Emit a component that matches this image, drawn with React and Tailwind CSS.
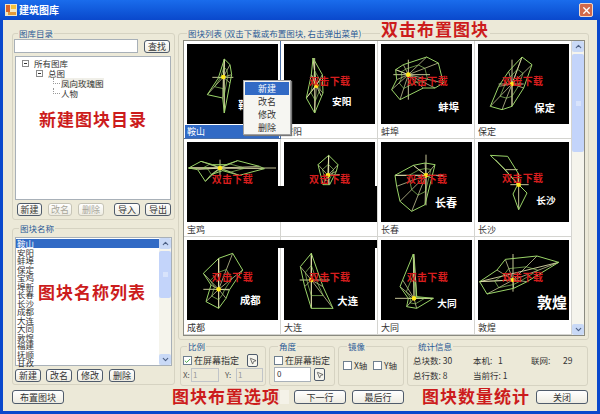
import { Check, ChevronDown, ChevronUp, MousePointer2, X } from "lucide-react";

const cells = [
  { name: "鞍山", ox: 21, oy: 133, selected: true, outline: "133,178 150,195 155,225 150,250 133,340 128,295 82,285 115,235 133,178", spokes: "M133 178V340M97 233H160", c: [130, 232], label: { text: "鞍山", x: 175, y: 328, size: 30 } },
  { name: "安阳", ox: 313, oy: 133, outline: "400,175 428,225 430,280 405,340 380,295 395,225 400,175", spokes: "M405 175V340M380 295L425 235M395 225L425 290", c: [410, 258], red: [388, 255], label: { text: "安阳", x: 457, y: 316, size: 29 } },
  { name: "蚌埠", ox: 3, oy: 133, outline: "47,210 70,195 140,172 175,190 190,250 165,265 130,265 60,300 35,270 50,240 47,210", spokes: "M85 180V300M40 225H150", c: [85, 225], red: [80, 255], label: { text: "蚌埠", x: 175, y: 333, size: 31 } },
  { name: "保定", ox: 293, oy: 133, outline: "425,172 455,195 430,265 395,320 365,330 330,320 355,260 385,215 425,172", spokes: "M395 180V320M355 253H430", c: [395, 253], red: [365, 255], label: { text: "保定", x: 462, y: 337, size: 31 } },
  { name: "宝鸡", ox: 23, oy: 22, outline: "28,100 65,80 100,90 140,90 175,78 240,95 255,102 180,122 130,108 95,120 78,140 55,105 28,100", spokes: "M28 100H290M122 75V125", c: [122, 100], red: [97, 145] },
  { name: "", ox: 313, oy: 22, outline: "447,62 475,90 470,110 450,150 430,150 415,90 447,62", spokes: "M447 62V150M445 122L480 120", c: [445, 122], red: [388, 145] },
  { name: "长春", ox: 3, oy: 22, outline: "100,92 135,85 165,90 155,130 135,210 95,230 60,200 50,155 45,122 100,92", spokes: "M138 60V212M45 122H190", c: [138, 122], red: [78, 145], label: { text: "长春", x: 165, y: 217, size: 33 } },
  { name: "长沙", ox: 293, oy: 22, outline: "330,62 382,65 415,118 415,150 440,175 415,225 398,178 412,150 375,105 330,62", spokes: "M415 118V225M390 150H445M345 75L415 150M375 105L412 105", c: [415, 150], red: [365, 143], web: false, label: { text: "长沙", x: 468, y: 208, size: 29 } },
  { name: "成都", ox: 23, oy: 30, outline: "118,85 160,70 190,120 150,180 140,205 118,235 80,215 95,165 72,130 118,85", spokes: "M118 85V235M72 178H150", c: [118, 178], red: [97, 153], label: { text: "成都", x: 182, y: 222, size: 31 } },
  { name: "大连", ox: 313, oy: 30, outline: "395,70 362,110 375,170 395,235 460,235 430,170 395,70", spokes: "M395 70V235M360 150H450", c: [395, 150], red: [388, 153], label: { text: "大连", x: 473, y: 225, size: 31 } },
  { name: "大同", ox: 3, oy: 30, outline: "100,72 68,150 60,170 85,205 80,230 110,235 160,205 110,200 100,72", spokes: "M102 72L110 200M45 205H160", c: [102, 205], red: [80, 153], label: { text: "大同", x: 172, y: 231, size: 29 } },
  { name: "敦煌", ox: 293, oy: 30, outline: "298,155 350,120 375,88 470,78 535,97 440,155 400,175 320,192 298,155", spokes: "M398 72V185M298 155L535 97", c: [398, 150], red: [365, 153], label: { text: "敦煌", x: 470, y: 234, size: 45 } },
];

const names = ["鞍山", "安阳", "蚌埠", "保定", "宝鸡", "埠新", "长春", "长沙", "成都", "大连", "大同", "敦煌", "福建", "抚顺", "甘孜"];

function Plot({ cell }) {
  const pts = cell.outline.split(" ").map((p) => p.split(",").map(Number));
  const [cx, cy] = cell.c;
  // rose charts: spokes from the centre plus an inner ring
  const web = pts.map(([x, y]) => `M${cx} ${cy}L${x} ${y}`).join("");
  const ring = pts.map(([x, y]) => `${cx + (x - cx) * 0.55},${cy + (y - cy) * 0.55}`).join(" ");
  return (
    <svg viewBox={`${cell.ox} ${cell.oy} 273 240`} className="block w-[91px] h-[80px] bg-black">
      {cell.web !== false && <path d={web} fill="none" stroke="#ecebb4" strokeWidth="2" />}
      <path d={cell.spokes} fill="none" stroke="#ecebb4" strokeWidth="2.5" />
      {cell.web !== false && <polyline points={ring} fill="none" stroke="#9ad468" strokeWidth="2" />}
      <polyline points={cell.outline} fill="none" stroke="#9ad468" strokeWidth="3" />
      <circle cx={cx} cy={cy} r="7" fill="#ffe81a" />
      {cell.red && (
        <text x={cell.red[0]} y={cell.red[1]} fill="#d81e1e" fontSize="30" fontWeight="700" letterSpacing="1">
          双击下载
        </text>
      )}
      {cell.label && (
        <text x={cell.label.x} y={cell.label.y} fill="#ffffff" fontSize={cell.label.size} fontWeight="700">
          {cell.label.text}
        </text>
      )}
    </svg>
  );
}

function Btn({ children, className = "", disabled }) {
  return (
    <div
      className={
        "flex items-center justify-center h-[13px] rounded-[3px] border bg-gradient-to-b from-white to-[#eeece2] text-[9px] leading-none " +
        (disabled ? "border-[#c6c4b6] text-[#a8a69a] " : "border-[#4f5b6b] text-[#333] ") +
        className
      }
    >
      {children}
    </div>
  );
}

function Group({ title, className = "", children }) {
  return (
    <fieldset className={"min-w-0 border border-[#d6d3c2] rounded-[3px] " + className}>
      <legend className="ml-[4px] px-[1px] text-[8.5px] leading-[10px] h-[10px] text-[#2b5a96] whitespace-nowrap">{title}</legend>
      {children}
    </fieldset>
  );
}

function Box({ checked }) {
  return (
    <div className="flex items-center justify-center w-[9px] h-[9px] border border-[#6f7f8f] bg-white shrink-0">
      {checked && <Check size={8} strokeWidth={3} className="text-[#2f9e2f]" />}
    </div>
  );
}

function PickBtn() {
  return (
    <div className="flex items-center justify-center w-[11px] h-[13px] rounded-[2px] border border-[#4f5b6b] bg-[#f6f5ee] shrink-0">
      <MousePointer2 size={8} className="text-[#333]" />
    </div>
  );
}

function Scroll({ thumbClass }) {
  return (
    <div className="flex flex-col w-[12px] bg-[#f5f4ec] shrink-0">
      <div className="flex items-center justify-center h-[11px] bg-[#c9d9f6] rounded-[2px]">
        <ChevronUp size={9} strokeWidth={3} className="text-[#4d6185]" />
      </div>
      <div className={"flex items-center justify-center mt-[2px] bg-[#c3d4fa] rounded-[2px] " + thumbClass}>
        <div className="w-[5px] h-[5px] bg-[#d8e3fb]" />
      </div>
      <div className="flex-1" />
      <div className="flex items-center justify-center h-[11px] bg-[#c9d9f6] rounded-[2px]">
        <ChevronDown size={9} strokeWidth={3} className="text-[#4d6185]" />
      </div>
    </div>
  );
}

function Minus() {
  return (
    <div className="flex items-center justify-center w-[7px] h-[7px] border border-[#8a8a8a] bg-white shrink-0">
      <div className="w-[3px] h-px bg-[#333]" />
    </div>
  );
}

export default function App() {
  const note = "text-[#cc1c1c] font-bold text-[17px] leading-[22px] tracking-[1px] whitespace-nowrap";

  return (
    <div className="flex flex-col w-[600px] h-[414px] overflow-hidden bg-[#ece9d8] text-[#333] font-['Noto_Sans_CJK_SC','Liberation_Sans',sans-serif]">
      <div className="flex items-center h-[20px] pl-[5px] pr-[7px] bg-gradient-to-b from-[#1a6cec] to-[#0a48cc] shrink-0">
        <svg width="12" height="12" viewBox="0 0 12 12" className="shrink-0">
          <rect width="12" height="12" fill="#f4e6c0" />
          <rect x="1" y="1" width="4" height="7" fill="#d9632a" />
          <rect x="6" y="1" width="5" height="4" fill="#f2c23c" />
          <rect x="3" y="8" width="8" height="3" fill="#e39a3a" />
        </svg>
        <span className="ml-[2px] text-white font-bold text-[10px] leading-none">建筑图库</span>
        <div className="flex items-center justify-center ml-auto w-[14px] h-[14px] rounded-[2px] border border-[#f0d8cc] bg-[#d2694a]">
          <X size={11} strokeWidth={3} className="text-white" />
        </div>
      </div>

      <div className="flex flex-col flex-1 border-x-[3px] border-b-[3px] border-[#0a48cc]">
        <div className="flex pt-[8px] pl-[9px] gap-[3px]">
          <div className="flex flex-col w-[163px] gap-[3px]">
            <Group title="图库目录" className="h-[192px] px-[1px]">
              <div className="flex items-center h-[14px] mt-[1px]">
                <div className="w-[124px] h-[14px] border border-[#a8b0b8] bg-white" />
                <Btn className="w-[26px] ml-[6px]">查找</Btn>
              </div>
              <div className="flex flex-col w-[156px] h-[144px] mt-[3px] ml-[1px] pt-[1px] border border-[#a8b0b8] bg-white text-[8.5px] leading-[10px]">
                <div className="flex items-center h-[10px] pl-[6px] gap-[5px]">
                  <Minus />
                  <span>所有图库</span>
                </div>
                <div className="flex items-center h-[10px] pl-[20px] gap-[5px]">
                  <Minus />
                  <span>总图</span>
                </div>
                <div className="flex items-start h-[10px] pl-[37px]">
                  <div className="w-[7px] h-[6px] border-l border-b border-dotted border-[#999]" />
                  <span className="ml-px bg-[#f0efe8]">凤向玫瑰图</span>
                </div>
                <div className="flex items-start h-[10px] pl-[37px]">
                  <div className="w-[7px] h-[6px] border-l border-b border-dotted border-[#999]" />
                  <span className="ml-px">人物</span>
                </div>
                <div className={"mt-[10px] text-center " + note}>新建图块目录</div>
              </div>
              <div className="flex mt-[3px] ml-[3px]">
                <Btn className="w-[25px]">新建</Btn>
                <Btn disabled className="w-[24px] ml-[6px]">改名</Btn>
                <Btn disabled className="w-[26px] ml-[6px]">删除</Btn>
                <Btn className="w-[26px] ml-[10px]">导入</Btn>
                <Btn className="w-[26px] ml-[5px]">导出</Btn>
              </div>
            </Group>

            <Group title="图块名称" className="h-[162px] px-[2px]">
              <div className="relative flex w-[157px] h-[129px] mt-[4px] border border-[#a8b0b8] bg-white">
                <div className="flex-1 pt-px text-[8.5px] leading-[8.5px]">
                  {names.map((name, i) => (
                    <div key={name} className={"pl-[1px] h-[8.5px] " + (i === 0 ? "bg-[#316ac5] text-white" : "")}>
                      {name}
                    </div>
                  ))}
                </div>
                <Scroll thumbClass="h-[47px]" />
                <div className={"absolute left-[22px] top-[43px] " + note}>图块名称列表</div>
              </div>
              <div className="flex mt-[3px]">
                <Btn className="w-[26px]">新建</Btn>
                <Btn className="w-[26px] ml-[5px]">改名</Btn>
                <Btn className="w-[26px] ml-[5px]">修改</Btn>
                <Btn className="w-[26px] ml-[6px]">删除</Btn>
              </div>
            </Group>
          </div>

          <div className="flex flex-col w-[411px] gap-[1px]">
            <div className="relative">
              <Group title="图块列表 (双击下载或布置图块, 右击弹出菜单)" className="h-[312px] px-[4px]">
                <div className="flex w-[402px] h-[296px] mt-[2px] border border-[#8a8a80] bg-white">
                  <div className="relative grid grid-cols-[repeat(4,97px)] auto-rows-[98px] w-[388px]">
                    {cells.map((cell) => (
                      <div key={cell.ox + "-" + cell.oy} className={"pt-[3px] px-[3px] border-b border-r " + (cell.selected ? "border-[#4a6fa5]" : "border-[#d4d4d0]")}>
                        <Plot cell={cell} />
                        <div className={"mt-px -mx-[2px] pl-[2px] h-[13px] text-[9px] leading-[13px] " + (cell.selected ? "bg-[#316ac5] text-white" : "text-[#333]")}>
                          {cell.name}
                        </div>
                      </div>
                    ))}
                    <div className="absolute left-[3px] top-[145px] w-[190px] h-[36px] bg-black" />
                    <div className="absolute left-[3px] top-[199px] w-[190px] h-[8px] bg-black" />
                    <div className="absolute left-[59px] top-[39px] flex flex-col w-[48px] h-[55px] p-px border border-[#a0a0a0] bg-[#f6f6f2] shadow-[1px_1px_1px_#777] text-[9px] leading-[13px] text-center">
                      <div className="h-[13px] bg-[#316ac5] text-white">新建</div>
                      <div className="h-[13px]">改名</div>
                      <div className="h-[13px]">修改</div>
                      <div className="h-[13px]">删除</div>
                    </div>
                  </div>
                  <Scroll thumbClass="h-[98px]" />
                </div>
              </Group>
              <div className="absolute left-[202px] top-[-8px] px-[1px] bg-[#ece9d8] text-[#cc1c1c] font-bold text-[17px] leading-[18px] tracking-[1px] whitespace-nowrap">双击布置图块</div>
            </div>

            <div className="flex justify-between ml-[2px] w-[408px] h-[45px]">
              <Group title="比例" className="w-[86px] px-[2px]">
                <div className="flex items-center h-[13px] mt-[3px] gap-[2px]">
                  <Box checked />
                  <span className="text-[9px] leading-none whitespace-nowrap">在屏幕指定</span>
                  <div className="ml-auto mr-[5px]">
                    <PickBtn />
                  </div>
                </div>
                <div className="flex items-center h-[14px] mt-[1px] text-[8px] text-[#555]">
                  <span className="w-[8px]">X:</span>
                  <div className="w-[28px] h-[14px] pl-px border border-[#c0c4c8] bg-[#ece9d8] text-[#999] leading-[12px]">1</div>
                  <span className="ml-[6px] w-[11px]">Y:</span>
                  <div className="w-[27px] h-[14px] pl-px border border-[#c0c4c8] bg-[#ece9d8] text-[#999] leading-[12px]">1</div>
                </div>
              </Group>

              <Group title="角度" className="w-[66px] px-[4px]">
                <div className="flex items-center h-[11px] mt-[4px] gap-[2px]">
                  <Box />
                  <span className="text-[9px] leading-none whitespace-nowrap">在屏幕指定</span>
                </div>
                <div className="flex items-center h-[15px] mt-[1px] gap-[3px]">
                  <div className="w-[37px] h-[15px] pl-[2px] border border-[#a8b0b8] bg-white text-[8px] leading-[12px]">0</div>
                  <PickBtn />
                </div>
              </Group>

              <Group title="镜像" className="w-[66px] px-[4px]">
                <div className="flex items-center h-[11px] mt-[9px] text-[8.5px] leading-none">
                  <Box />
                  <span className="ml-[2px] w-[19px] whitespace-nowrap">X轴</span>
                  <Box />
                  <span className="ml-[2px] whitespace-nowrap">Y轴</span>
                </div>
              </Group>

              <Group title="统计信息" className="w-[181px] px-[5px]">
                <div className="grid grid-cols-[60px_58px_32px_auto] items-center mt-[2px] text-[8.5px] leading-[15px]">
                  <span>总块数: 30</span>
                  <span>本机:&nbsp;&nbsp;&nbsp;1</span>
                  <span>联网:</span>
                  <span>29</span>
                  <span>总行数: 8</span>
                  <span>当前行: 1</span>
                </div>
              </Group>
            </div>
          </div>
        </div>

        <div className="flex items-center h-[18px] mt-[2px] pl-[9px]">
          <Btn className="w-[52px] h-[14px]">布置图块</Btn>
          <div className={"ml-[108px] mb-[2px] w-[108px] " + note}>图块布置选项</div>
          <div className="w-[9px] h-[14px] bg-[#f4f2e8]" />
          <Btn className="w-[52px] h-[14px] ml-[5px]">下一行</Btn>
          <Btn className="w-[52px] h-[14px] ml-[6px]">最后行</Btn>
          <div className={"ml-[18px] mb-[2px] w-[108px] " + note}>图块数量统计</div>
          <Btn className="w-[52px] h-[14px] ml-[6px] border-[#2f5f9f]">关闭</Btn>
        </div>
      </div>
    </div>
  );
}
